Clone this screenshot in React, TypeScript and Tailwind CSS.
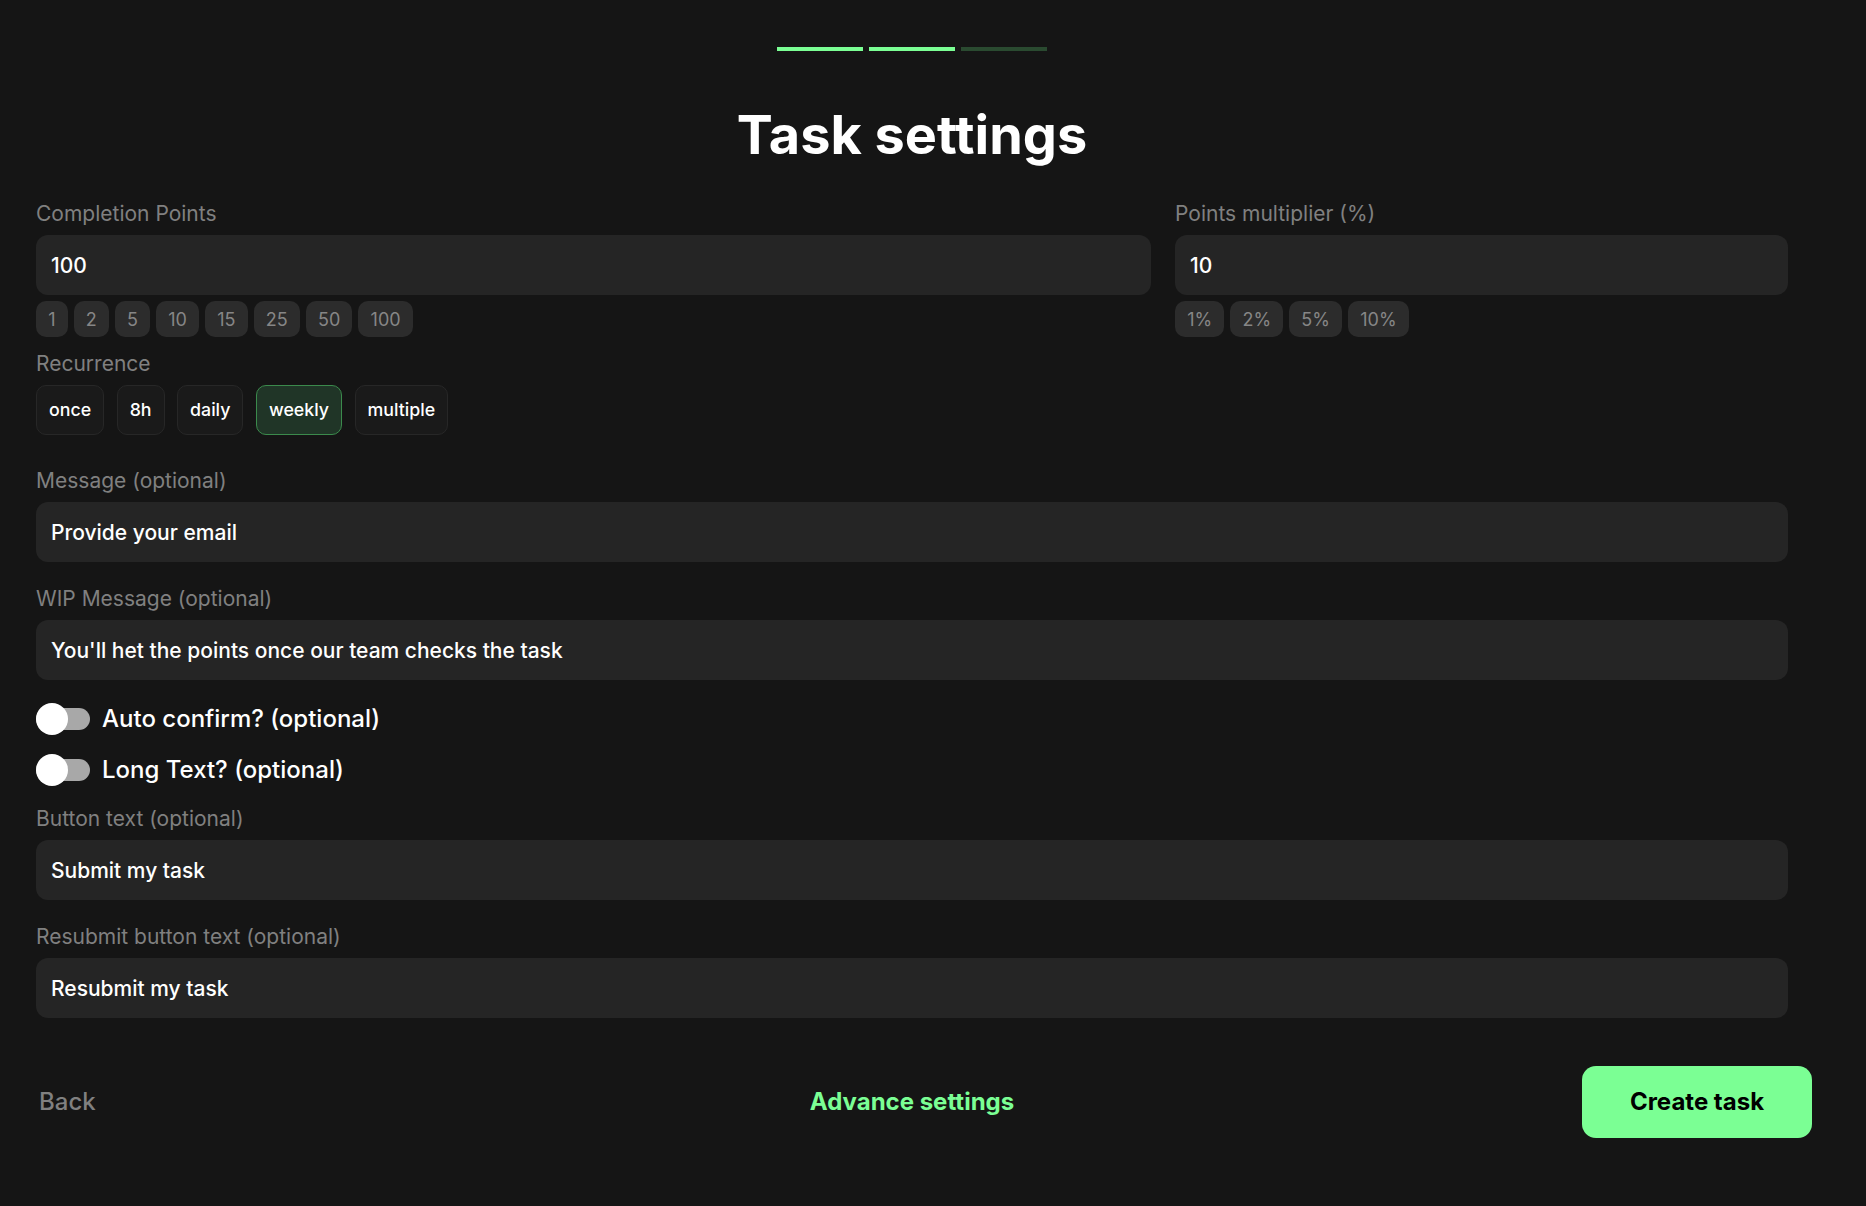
const Label = ({ children, className = "" }: { children: React.ReactNode; className?: string }) => (
  <div className={`text-[21px] leading-[28px] text-[#808080] ${className}`}>{children}</div>
);

const Field = ({ value }: { value: string }) => (
  <div className="flex h-[60px] items-center rounded-[12px] bg-[#252525] px-[15px] pt-[2px] text-[21px] font-medium text-white">
    {value}
  </div>
);

const Chips = ({ items }: { items: string[] }) => (
  <div className="mt-[6px] flex gap-[6px]">
    {items.map((c) => (
      <div
        key={c}
        className="flex h-[36px] items-center rounded-[10px] bg-[#2c2c2c] px-[12.15px] text-[18px] text-[#868686]"
      >
        {c}
      </div>
    ))}
  </div>
);

const Toggle = ({ label }: { label: string }) => (
  <div className="flex h-[32px] items-center gap-[12px]">
    <div className="relative h-[22px] w-[54px] rounded-full bg-[#a8a8a8]">
      <div className="absolute top-[-5px] left-0 h-[32px] w-[32px] rounded-full bg-white" />
    </div>
    <span className="text-[24px] font-medium text-white">{label}</span>
  </div>
);

export default function App() {
  return (
    <div className="min-h-screen w-full bg-[#151515] font-['Inter',sans-serif]">
      <div className="w-[1824px]">
        <div className="flex justify-center gap-[6px] pt-[47px]">
          <div className="h-[4px] w-[86px] bg-[#7bff94]" />
          <div className="h-[4px] w-[86px] bg-[#7bff94]" />
          <div className="h-[4px] w-[86px] bg-[#2a4a30]" />
        </div>

        <h1 className="mt-[52px] text-center text-[54px] leading-[64px] font-bold text-white">Task settings</h1>

        <div className="mt-[33px] px-[36px]">
          <div className="flex gap-[24px]">
            <div className="min-w-0 flex-1">
              <Label className="mb-[7px]">Completion Points</Label>
              <Field value="100" />
              <Chips items={["1", "2", "5", "10", "15", "25", "50", "100"]} />
            </div>
            <div className="w-[613px]">
              <Label className="mb-[7px]">Points multiplier (%)</Label>
              <Field value="10" />
              <Chips items={["1%", "2%", "5%", "10%"]} />
            </div>
          </div>

          <Label className="mt-[13px] mb-[7px]">Recurrence</Label>
          <div className="flex gap-[12.5px]">
            {["once", "8h", "daily", "weekly", "multiple"].map((r) => (
              <div
                key={r}
                className={
                  r === "weekly"
                    ? "flex h-[50px] items-center rounded-[10px] border border-[#3b8a4c] bg-[#203527] px-[12px] text-[17.8px] font-medium text-white"
                    : "flex h-[50px] items-center rounded-[10px] border border-[#272727] bg-[#1a1a1a] px-[12px] text-[17.8px] font-medium text-white"
                }
              >
                {r}
              </div>
            ))}
          </div>

          <Label className="mt-[32px] mb-[7px]">Message (optional)</Label>
          <Field value="Provide your email" />

          <Label className="mt-[23px] mb-[7px]">WIP Message (optional)</Label>
          <Field value="You'll het the points once our team checks the task" />

          <div className="mt-[23px] flex flex-col gap-[19px]">
            <Toggle label="Auto confirm? (optional)" />
            <Toggle label="Long Text? (optional)" />
          </div>

          <Label className="mt-[19px] mb-[7px]">Button text (optional)</Label>
          <Field value="Submit my task" />

          <Label className="mt-[23px] mb-[7px]">Resubmit button text (optional)</Label>
          <Field value="Resubmit my task" />
        </div>

        <div className="mt-[48px] grid grid-cols-[1fr_auto_1fr] items-center px-[12px]">
          <div className="pl-[27px] text-[24px] font-medium text-[#808080]">Back</div>
          <div className="text-[24px] font-bold text-[#7bff94]">Advance settings</div>
          <div className="flex justify-end">
            <div className="flex h-[72px] w-[230px] items-center justify-center rounded-[14px] bg-[#7bff94] text-[24px] font-bold text-black">
              Create task
            </div>
          </div>
        </div>
      </div>
    </div>
  );
}
